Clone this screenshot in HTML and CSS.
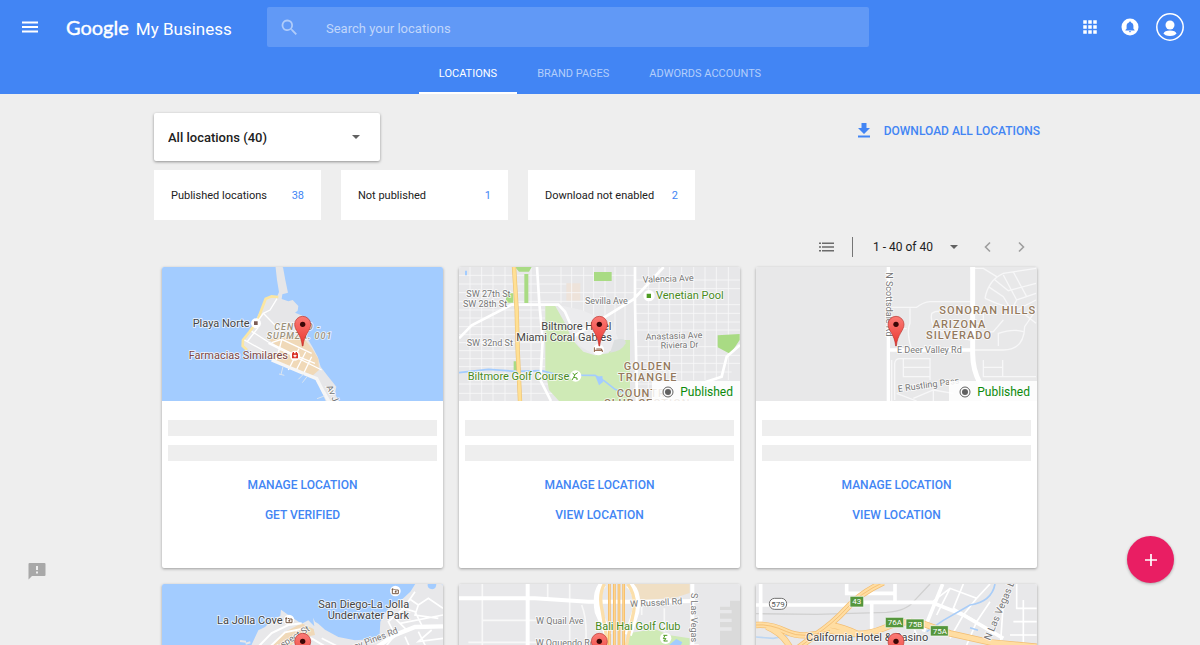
FILE: index.html
```html
<!DOCTYPE html>
<html lang="en">
<head>
<meta charset="utf-8">
<meta name="viewport" content="width=device-width, initial-scale=1">
<title>Google My Business</title>
<link rel="stylesheet" href="styles.css">
</head>
<body>
<svg class="defs" aria-hidden="true">
  <defs>
    <linearGradient id="pin-fill" x1="0" y1="0" x2="0" y2="1">
      <stop offset="0" stop-color="#fb7b76"/><stop offset="1" stop-color="#ea352e"/>
    </linearGradient>
    <symbol id="pin" viewBox="-30 -30 60 100" overflow="visible">
      <path d="M-24 0A24 24 0 1 1 24 0C24 19 4 30 1 65H-1C-4 30-24 19-24 0Z" fill="url(#pin-fill)" stroke="#b8322c" stroke-width="2"/>
      <circle r="8" fill="#3a0706"/>
    </symbol>
    <symbol id="camera" viewBox="-16 -16 32 32" overflow="visible">
      <circle r="16" fill="#fff"/>
      <path d="M-9-5V8H9V-3H0L-3-6M-8-8V-2M-11-5H-5" fill="none" stroke="#7b5c46" stroke-width="3"/><circle cx="1" cy="2" r="3" fill="#7b5c46"/>
    </symbol>
  </defs>
</svg>

<header class="topbar">
  <div class="topbar-row">
    <button class="icon-button menu-button" aria-label="Main menu">
      <svg width="24" height="24" viewBox="0 0 24 24" fill="#fff"><path d="M4 6.500h16v2H4zM4 11h16v2H4zM4 15.500h16v2H4z"/></svg>
    </button>
    <a class="logo" href="#"><span class="logo-google">Google</span><span class="logo-product">My Business</span></a>
    <form class="search" role="search">
      <svg width="21" height="21" viewBox="0 0 24 24" fill="currentColor" aria-hidden="true"><path d="M15.500 14h-.8l-.3-.3A6.500 6.500 0 1 0 13.700 14.400l.3.3v.8l5 5 1.500-1.500zm-6 0a4.500 4.500 0 1 1 0-9 4.500 4.500 0 0 1 0 9z"/></svg>
      <input type="text" placeholder="Search your locations" aria-label="Search your locations">
    </form>
    <div class="topbar-actions">
      <button class="icon-button apps-button" aria-label="Google apps">
        <svg width="24" height="24" viewBox="0 0 24 24" fill="#fff"><path d="M5 5h4v4H5zM10 5h4v4h-4zM15 5h4v4h-4zM5 10h4v4H5zM10 10h4v4h-4zM15 10h4v4h-4zM5 15h4v4H5zM10 15h4v4h-4zM15 15h4v4h-4z" stroke="#4285f4" stroke-width=".5"/></svg>
      </button>
      <button class="icon-button" aria-label="Notifications">
        <svg width="24" height="24" viewBox="0 0 24 24"><circle cx="12" cy="12" r="8.500" fill="#fff"/><path d="M12 6.500c-.6 0-1 .4-1 .9-1.600.5-2.400 1.800-2.400 3.300v3l-1.200 1.300v.5h9.200V15l-1.200-1.300v-3c0-1.500-.8-2.800-2.400-3.300 0-.5-.4-.9-1-.9zM10.900 16.200h2.200c0 .6-.5 1-1.100 1s-1.100-.4-1.100-1z" fill="#4285f4"/></svg>
      </button>
      <button class="icon-button" aria-label="Account">
        <svg width="28" height="28" viewBox="0 0 28 28"><circle cx="14" cy="14" r="13.200" fill="none" stroke="#fff" stroke-width="1.500"/><circle cx="14" cy="12" r="4.500" fill="#fff"/><ellipse cx="14" cy="20.300" rx="6.200" ry="2.800" fill="#fff"/></svg>
      </button>
    </div>
  </div>
  <nav class="tabs" aria-label="Sections">
    <a class="tab tab-active" href="#" aria-current="page">LOCATIONS</a>
    <a class="tab" href="#">BRAND PAGES</a>
    <a class="tab" href="#">ADWORDS ACCOUNTS</a>
  </nav>
</header>

<main class="content">
  <div class="page">
    <div class="filters">
      <div class="select-box group-select">
        <select aria-label="Location group"><option>All locations (40)</option></select>
      </div>
      <a class="download" href="#">
        <svg width="20" height="20" viewBox="0 0 20 20" fill="currentColor" aria-hidden="true"><path d="M7.500 2h5v5H16l-6 6-6-6h3.500zM4 14.500h12v2H4z"/></svg>
        DOWNLOAD ALL LOCATIONS
      </a>
    </div>
    <div class="stats">
      <a class="stat" href="#"><span>Published locations</span><span class="stat-count">38</span></a>
      <a class="stat" href="#"><span>Not published</span><span class="stat-count">1</span></a>
      <a class="stat" href="#"><span>Download not enabled</span><span class="stat-count">2</span></a>
    </div>
    <div class="toolbar">
      <button class="icon-button list-button" aria-label="List view">
        <svg width="18" height="20" viewBox="0 0 18 20" fill="#6b6b6b"><path d="M1 5.500h2v1.600H1zM4 5.500h12v1.600H4zM1 9.200h2v1.600H1zM4 9.200h12v1.600H4zM1 12.900h2v1.600H1zM4 12.900h12v1.600H4z"/></svg>
      </button>
      <div class="select-box range-select">
        <select aria-label="Range"><option>1 - 40 of 40</option></select>
      </div>
      <button class="icon-button" aria-label="Previous page">
        <svg width="20" height="20" viewBox="0 0 20 20" fill="none" stroke="#9e9e9e" stroke-width="1.600"><path d="M12 5.500L7.500 10l4.500 4.500"/></svg>
      </button>
      <button class="icon-button next-button" aria-label="Next page">
        <svg width="20" height="20" viewBox="0 0 20 20" fill="none" stroke="#9e9e9e" stroke-width="1.600"><path d="M8 5.500l4.500 4.500L8 14.500"/></svg>
      </button>
    </div>

    <div class="cards">
      <article class="card">
        <div class="map">
          <svg viewBox="21 21 843 402" preserveAspectRatio="xMidYMid slice" role="img" aria-label="Map of Playa Norte">
            <rect width="900" height="440" fill="#a3ccff"/>
            <path d="M361 15L384 22 391 60 399 98 382 103 380 117 400 124 413 120 430 138 428 152 420 158 450 170 462 210 455 232 473 262 488 290 497 320 520 350 544 380 540 402 552 423H512L490 370 474 350 400 320 350 300 300 282 264 262 262 240 283 214 318 150 330 116 350 109 366 111 372 96 366 60Z" fill="#e6e6e8"/>
            <path d="M370 111L350 109 332 116 320 148 306 185 283 216 264 240 263 258 276 270" fill="none" stroke="#fbe6a2" stroke-width="8"/>
            <path d="M340 238L440 226 470 264 490 296 492 330 474 346 400 318 350 298 380 270Z" fill="#f0d9b8"/>
            <path d="M366 116L345 150 325 160 300 195M325 160L372 208M290 214L340 246 430 290 480 310M268 240L330 274M310 202L276 246M350 248L380 238 470 280M340 250L500 330M432 266L400 330M452 276L424 330M470 290L446 340M380 240L364 300" fill="none" stroke="#fff" stroke-width="4"/>
            <path d="M350 300L450 342 485 356 505 395 525 430" fill="none" stroke="#f6f6f6" stroke-width="10"/>
            <path d="M384 320L378 343M372 342L388 346M446 342L430 358M456 350L442 368M508 408L486 416" fill="none" stroke="#dbe5f0" stroke-width="3"/>
            <circle cx="303" cy="190" r="15" fill="#fff"/><path d="M297 184h11v11h-11z" fill="#7b5c55"/>
            <circle cx="420" cy="287" r="15" fill="#fff"/><path d="M411 280h18v15h-18zM413 276h4v5h-4zM422 276h4v5h-4z" fill="#d93025"/><path d="M418 284h4v8h-4zM415 286h10v3h-10z" fill="#fff"/>
            <text class="place" x="113" y="200">Playa Norte</text>
            <text class="place place-brown" x="101" y="297">Farmacias Similares</text>
            <text class="district district-italic" x="358" y="210">CENTRO -</text>
            <text class="district district-italic" x="335" y="238">SUPMZA. 001</text>
            <text class="street" transform="translate(514 380) rotate(66)">Av J</text>
            <use href="#pin" x="413" y="163" width="60" height="100"/>
          </svg>
        </div>
        <div class="lines"><div class="line"></div><div class="line"></div></div>
        <div class="card-actions"><a href="#">MANAGE LOCATION</a><a href="#">GET VERIFIED</a></div>
      </article>

      <article class="card">
        <div class="map">
          <svg viewBox="12 21 843 402" preserveAspectRatio="xMidYMid slice" role="img" aria-label="Map of Biltmore Hotel, Miami Coral Gables">
            <rect width="900" height="440" fill="#e7e7e9"/>
            <path d="M334 70h42v52h-42z" fill="#eee3da"/>
            <g stroke="#f8f8f9" stroke-width="2.500" fill="none">
              <path d="M12 46H540M12 72H334M12 98H540M12 124H400M12 150H270M12 174H270M12 200H270M12 224H260M12 248H260M12 272H260M12 296H270M12 320H270M12 372H290M12 400H310M540 60H860M540 86H860M540 134H860M540 160H860M540 186H860M540 210H860M540 260H790M540 286H860M540 310H860M540 336H830M540 372H620"/>
              <path d="M45 20V423M80 20V423M114 20V423M150 20V423M228 20V423M318 20V130M350 20V160M386 20V230M416 20V230M450 20V230M480 20V230M510 20V423M580 20V423M612 20V360M644 20V360M680 20V360M716 20V360M750 20V360M784 20V360M820 20V360"/>
            </g>
            <path d="M180 21h50l-8 14h-30zM208 42h12v87h-12zM153 100h22v28h-22zM417 36h53v27h-53zM788 226l66-4v18l-28 42-38-20zM176 304h12v26h-12z" fill="#a9db84"/>
            <path d="M271 135H299L330 190 352 240 385 275 420 286 460 280 485 240H525V423H312L282 390 271 330Z" fill="#cfeab6"/>
            <path d="M299 133L320 140 346 200 370 256 420 286 470 272 490 236 470 190 380 150Z" fill="#ececee"/>
            <path d="M478 240Q515 230 512 250Q500 275 465 278Z" fill="#dcdfe0"/>
            <path d="M12 338L100 328 180 334 260 332 310 345 420 346 450 364 480 388 512 400" fill="none" stroke="#a3ccff" stroke-width="5"/>
            <path d="M422 350L442 348 444 366 432 376Z" fill="#a3ccff"/><path d="M30 32h6v14h-6z" fill="#a3ccff"/>
            <path d="M12 235L50 196 170 134H310L330 155 350 200M345 236L535 118 590 60 626 21M540 21V130L546 423M246 21L253 130 263 240 256 360 288 423M855 255L815 290 800 350 740 370" fill="none" stroke="#fff" stroke-width="8"/>
            <path d="M177 20L185 150 188 270 195 423" fill="none" stroke="#efc476" stroke-width="13"/><path d="M177 20L185 150 188 270 195 423" fill="none" stroke="#ffe094" stroke-width="9"/>
            <circle cx="582" cy="107" r="17" fill="#fff"/><path d="M575 101h13v13h-13z" fill="#4d9c22"/>
            <circle cx="430" cy="269" r="17" fill="#fff"/><path d="M418 262v14M418 271h24v5M424 267h16v4" fill="none" stroke="#8b5b3c" stroke-width="3"/>
            <circle cx="362" cy="348" r="17" fill="#fff"/><path d="M353 340l6 4 9-6M360 344l-4 8 10 2v6M356 352l-5 8" fill="none" stroke="#4d9c22" stroke-width="3"/>
            <text class="street" x="34" y="112">SW 27th St</text><text class="street" x="24" y="140">SW 28th St</text><text class="street" x="35" y="258">SW 32nd St</text>
            <text class="street" x="390" y="132">Sevilla Ave</text><text class="street" transform="translate(563 68) rotate(-2)">Valencia Ave</text>
            <text class="street" transform="translate(572 240) rotate(-2)">Anastasia Ave</text><text class="street" transform="translate(617 266) rotate(-2)">Riviera Dr</text>
            <text class="place place-green" x="603" y="116">Venetian Pool</text><text class="place place-green" x="38" y="359">Biltmore Golf Course</text>
            <text class="place" x="259" y="209">Biltmore Hotel</text><text class="place" x="184" y="242">Miami Coral Gables</text>
            <text class="district" x="506" y="330">GOLDEN</text><text class="district" x="489" y="362">TRIANGLE</text><text class="district" x="485" y="411">COUNTRY</text><text class="district" x="446" y="441">CLUB SECTION</text>
            <use href="#pin" x="403" y="163" width="60" height="100"/>
          </svg>
          <div class="status"><svg width="12" height="12" viewBox="0 0 12 12" aria-hidden="true"><circle cx="6" cy="6" r="5" fill="none" stroke="#616161"/><circle cx="6" cy="6" r="3" fill="#616161"/></svg>Published</div>
        </div>
        <div class="lines"><div class="line"></div><div class="line"></div></div>
        <div class="card-actions"><a href="#">MANAGE LOCATION</a><a href="#">VIEW LOCATION</a></div>
      </article>

      <article class="card">
        <div class="map">
          <svg viewBox="18 21 843 402" preserveAspectRatio="xMidYMid slice" role="img" aria-label="Map of E Deer Valley Rd">
            <rect width="900" height="440" fill="#e8e8e9"/>
            <g fill="none" stroke="#f7f7f8" stroke-width="4">
              <path d="M425 142H500Q520 126 540 125H670M480 145V190Q468 215 485 268M425 206H470M670 270H760Q822 270 824 200L858 150M745 258V220Q790 205 820 215M700 150V190H650M545 160Q560 150 580 155M545 160Q540 190 560 210L660 240M425 300V423M434 420V310Q436 296 450 296H540V360M460 296V350H540M460 322H540M700 300V350H858M700 322H760M758 300V350M490 415L550 390 610 400M440 400L500 423M550 390V423"/>
              <path d="M705 115Q715 60 760 40L858 25M715 80L760 110 790 160M735 60L775 92 858 70M760 45L800 120 858 100M790 36L830 110M705 115L740 130 800 150 858 120M800 120L780 160M660 25H700L740 50M820 160L858 190M690 220L730 215 760 180"/>
            </g>
            <path d="M415 21V423M415 270H670" fill="none" stroke="#fff" stroke-width="10"/><path d="M668 21V280Q668 330 690 370L702 423" fill="none" stroke="#fff" stroke-width="15"/>
            <text class="street" transform="translate(408 37) rotate(90)">N Scottsdale Rd</text>
            <text class="street" x="441" y="278">E Deer Valley Rd</text><text class="street" transform="translate(445 396) rotate(-8)">E Rustling Pass</text>
            <text class="district" x="568" y="162">SONORAN HILLS</text><text class="district" x="548" y="204">ARIZONA</text><text class="district" x="528" y="236">SILVERADO</text>
            <use href="#pin" x="408" y="163" width="60" height="100"/>
          </svg>
          <div class="status"><svg width="12" height="12" viewBox="0 0 12 12" aria-hidden="true"><circle cx="6" cy="6" r="5" fill="none" stroke="#616161"/><circle cx="6" cy="6" r="3" fill="#616161"/></svg>Published</div>
        </div>
        <div class="lines"><div class="line"></div><div class="line"></div></div>
        <div class="card-actions"><a href="#">MANAGE LOCATION</a><a href="#">VIEW LOCATION</a></div>
      </article>

      <article class="card">
        <div class="map">
          <svg viewBox="21 87 843 402" preserveAspectRatio="xMidYMid slice" role="img" aria-label="Map of La Jolla Cove">
            <rect width="900" height="500" fill="#a3ccff"/>
            <path d="M782 85L766 110 740 134 712 146 690 175 676 200 674 236 655 252 600 256 550 246 510 224 490 206 480 200 474 188 478 214 460 196 440 206 400 180 378 164 376 182 346 200 330 216 310 226 280 290 300 500H870V85Z" fill="#e8e8ea"/>
            <path d="M818 87h26q0 14-12 16-16-2-14-16z" fill="#a3ccff"/><path d="M255 258l18 2M272 266l14-4" stroke="#e8e8ea" stroke-width="6"/>
            <path d="M350 270L380 236 440 205 476 222 480 240 430 250 390 290Z" fill="#f0d9b8"/>
            <path d="M310 275L350 234 400 210 440 205M340 280L390 232 450 220M365 290L420 240 470 250 520 280" fill="none" stroke="#fff" stroke-width="6"/>
            <path d="M780 110L746 160 700 200 720 240 680 290M764 132L790 150 820 130 864 160M746 160L780 170 800 210M720 190L760 230M790 150L780 180 850 190M735 205L864 180M790 230L820 290M830 225L790 260 864 250M750 245L770 290M500 250L560 280" fill="none" stroke="#fff" stroke-width="5"/>
            <path d="M864 214L780 216 720 240 660 280" fill="none" stroke="#fff" stroke-width="13"/>
            <use href="#camera" x="705" y="92" width="32" height="32"/><use href="#camera" x="386" y="179" width="32" height="32"/>
            <text class="place" x="490" y="158">San Diego-La Jolla</text><text class="place" x="518" y="191">Underwater Park</text><text class="place" x="186" y="208">La Jolla Cove</text>
            <text class="street" transform="translate(348 300) rotate(-32)">Prospect St</text><text class="street" transform="translate(556 301) rotate(-21)">Torrey Pines Rd</text>
            <use href="#pin" x="413" y="229" width="60" height="100"/>
          </svg>
        </div>
        <div class="lines"><div class="line"></div><div class="line"></div></div>
        <div class="card-actions"><a href="#">MANAGE LOCATION</a><a href="#">VIEW LOCATION</a></div>
      </article>

      <article class="card">
        <div class="map">
          <svg viewBox="12 87 843 402" preserveAspectRatio="xMidYMid slice" role="img" aria-label="Map of Bali Hai Golf Club">
            <rect width="900" height="500" fill="#e8e8ea"/>
            <path d="M795 155h30v-18h30v140h-60v-50h35v-10h-35v-16h35v-10h-35v-16h35v-10h-35z" fill="#dadada"/>
            <path d="M530 87H704V114L660 128 560 136 540 120Z" fill="#f0dfc4"/>
            <path d="M520 235L600 222 640 240 704 250V500H510Z" fill="#cfeab6"/><path d="M640 272L664 252 682 262 672 280Z" fill="#a3ccff"/>
            <path d="M82 87V300M278 87V130M344 87V270M82 196H244M40 262H230M218 262H360M380 150Q400 200 390 290M628 160V230M560 140V180" fill="none" stroke="#f8f8f8" stroke-width="5"/>
            <path d="M12 130H240L400 140H560L720 138M218 87V290M712 87V500" fill="none" stroke="#fff" stroke-width="12"/>
            <path d="M445 87Q420 110 430 170L460 240M520 87Q552 110 542 170L520 240" fill="none" stroke="#fff" stroke-width="22"/>
            <path d="M448 87Q430 120 442 170L462 290M518 87Q544 120 536 170L510 290" fill="none" stroke="#fbdfab" stroke-width="10"/>
            <path d="M463 87V300M478 87V300M492 87V300M506 87V300" fill="none" stroke="#f3b761" stroke-width="8"/><path d="M463 87V300M478 87V300M492 87V300M506 87V300" fill="none" stroke="#ffd58c" stroke-width="4"/>
            <circle cx="632" cy="250" r="17" fill="#fff"/><path d="M625 241h12M630 241l-5 10h8l-7 7h12" fill="none" stroke="#4d9c22" stroke-width="3"/>
            <text class="street" transform="translate(526 156) rotate(-3)">W Russell Rd</text><text class="street" x="243" y="208">W Quail Ave</text><text class="street" x="242" y="274">W Oquendo Rd</text>
            <text class="street" transform="translate(709 114) rotate(90)">S Las Vegas Blvd</text>
            <text class="place place-green" x="421" y="224">Bali Hai Golf Club</text>
            <use href="#pin" x="403" y="229" width="60" height="100"/>
          </svg>
        </div>
        <div class="lines"><div class="line"></div><div class="line"></div></div>
        <div class="card-actions"><a href="#">MANAGE LOCATION</a><a href="#">VIEW LOCATION</a></div>
      </article>

      <article class="card">
        <div class="map">
          <svg viewBox="18 87 843 402" preserveAspectRatio="xMidYMid slice" role="img" aria-label="Map of California Hotel and Casino">
            <rect width="900" height="500" fill="#e8e8ea"/>
            <path d="M18 176L200 178 410 172Q470 168 494 136L540 87" fill="none" stroke="#d0d0d0" stroke-width="4"/>
            <path d="M32 87V200M18 150H300M340 142H545L640 180 760 250M290 87V115H435V140M435 87V120M365 140V230M578 87L520 230" fill="none" stroke="#fff" stroke-width="11"/>
            <path d="M545 142L600 100 680 130 720 87M600 100L560 180M640 87L610 160 680 200 720 140M640 180L600 250M680 130L640 180M680 200L650 270M760 140L750 290M800 87V160H860M780 240H860M820 135V290M790 200H860M480 190L500 240" fill="none" stroke="#fff" stroke-width="5"/>
            <path d="M735 87Q725 140 660 150L580 196 530 230" fill="none" stroke="#a9cdf8" stroke-width="5"/><path d="M660 218l24 8" stroke="#a9cdf8" stroke-width="5"/>
            <path d="M18 246L70 250 120 240M365 226L300 250" stroke="#bcd6f3" stroke-width="5" fill="none"/>
            <g fill="none" stroke="#f3bd71" stroke-width="19"><path d="M400 82Q330 115 290 160T190 245L130 290M18 210Q60 206 110 230T240 226Q330 250 400 220T520 206L600 235 720 262 860 275M50 215Q110 240 130 300M240 210Q280 216 330 240"/></g>
            <g fill="none" stroke="#ffdda2" stroke-width="15"><path d="M400 82Q330 115 290 160T190 245L130 290M18 210Q60 206 110 230T240 226Q330 250 400 220T520 206L600 235 720 262 860 275M50 215Q110 240 130 300M240 210Q280 216 330 240"/></g>
            <path d="M400 82Q330 115 290 160T190 245L130 290M18 210Q60 206 110 230T240 226" fill="none" stroke="#eeb465" stroke-width="2"/>
            <rect x="58" y="130" width="52" height="33" rx="16" fill="#fff" stroke="#707070" stroke-width="3"/><text class="route" x="64" y="155">579</text>
            <g fill="#55963c" stroke="#fff" stroke-width="2"><path d="M300 124h41v32h-41zM406 187h55v31h-55zM468 192h54v31h-54zM541 212h54v31h-54z"/></g>
            <text class="exit" x="307" y="148">43</text><text class="exit" x="413" y="211">76A</text><text class="exit" x="475" y="216">75B</text><text class="exit" x="548" y="236">75A</text>
            <text class="street street-wide" transform="translate(720 258) rotate(-67)">N Las Vegas Blvd</text>
            <text class="place" x="168" y="259">California Hotel &amp; Casino</text>
            <use href="#pin" x="408" y="229" width="60" height="100"/>
          </svg>
        </div>
        <div class="lines"><div class="line"></div><div class="line"></div></div>
        <div class="card-actions"><a href="#">MANAGE LOCATION</a><a href="#">VIEW LOCATION</a></div>
      </article>
    </div>
  </div>
</main>

<button class="feedback" aria-label="Send feedback">
  <svg width="18" height="18" viewBox="0 0 18 18"><path d="M1.500 1h15q1 0 1 1v11q0 1-1 1H4L.5 17.500V2q0-1 1-1z" fill="#a8a8a8"/><path d="M8 4h2v4H8zM8 9.500h2v2H8z" fill="#eee"/></svg>
</button>
<button class="fab" aria-label="Add location">
  <svg width="24" height="24" viewBox="0 0 24 24" fill="none" stroke="#fff" stroke-width="1.700"><path d="M12 6v12M6 12h12"/></svg>
</button>
</body>
</html>
```

FILE: styles.css
```css
* { box-sizing: border-box; }

body {
  display: flex;
  flex-direction: column;
  height: 100vh;
  margin: 0;
  background: #eee;
  color: #212121;
  font-family: Roboto, "Liberation Sans", sans-serif;
  font-size: 11px;
}

a { color: inherit; text-decoration: none; }
svg { display: block; }
.defs { position: absolute; width: 0; height: 0; }

.icon-button {
  display: flex;
  padding: 0;
  border: 0;
  background: none;
  cursor: pointer;
}

/* Header */
.topbar { flex: none; background: #4285f4; color: #fff; }

.topbar-row {
  display: grid;
  grid-template-columns: 24px 177px minmax(0, 602px) 1fr;
  align-items: center;
  column-gap: 24px;
  padding: 7px 16px 0 18px;
}

.logo {
  display: flex;
  align-items: baseline;
  gap: 7px;
  font-size: 17px;
  white-space: nowrap;
}
.logo-google {
  font-family: Lato, sans-serif;
  font-size: 20px;
  -webkit-text-stroke: 0.4px #fff;
}

.search {
  display: flex;
  align-items: center;
  gap: 26px;
  height: 40px;
  padding: 0 12px;
  border-radius: 2px;
  background: #6199f6;
  color: #b0ccfa;
}
.search input {
  flex: 1;
  min-width: 0;
  padding: 2px 0 0;
  border: 0;
  outline: 0;
  background: none;
  color: #fff;
  font: 13px Roboto, sans-serif;
}
.search input::placeholder { color: #c0d6fb; opacity: 1; }

.topbar-actions {
  display: flex;
  justify-content: flex-end;
  align-items: center;
  gap: 14px;
}
.apps-button { padding-right: 2px; }

.tabs { display: flex; justify-content: center; margin-top: 7px; }
.tab {
  padding: 1px 20px 0;
  border-bottom: 2px solid transparent;
  color: #b3cefb;
  line-height: 37px;
}
.tab-active { border-color: #fff; color: #fff; }

/* Page */
.content { flex: 1; min-height: 0; overflow-y: auto; scrollbar-width: none; }
.page { max-width: 892px; margin: 0 auto; padding: 19px 0 16px; }

.filters { display: flex; justify-content: space-between; padding-right: 6px; }

.select-box { position: relative; }
.select-box::after {
  content: "";
  position: absolute;
  top: 50%;
  right: 20px;
  margin-top: -2px;
  border: 4px solid transparent;
  border-top-color: #616161;
  border-bottom: 0;
  pointer-events: none;
}
.select-box select {
  width: 100%;
  height: 100%;
  padding: 0;
  border: 0;
  outline: 0;
  appearance: none;
  background: none;
  color: inherit;
  font: inherit;
}

.group-select {
  width: 226px;
  height: 48px;
  border-radius: 2px;
  background: #fff;
  box-shadow: 0 1px 3px rgba(0, 0, 0, .4);
  font-size: 13px;
  font-weight: 500;
}
.group-select select { padding: 0 14px; }

.download {
  display: flex;
  align-items: center;
  gap: 10px;
  height: 36px;
  color: #4285f4;
  font-size: 12px;
  font-weight: 500;
}

.stats {
  display: grid;
  grid-template-columns: repeat(3, 167px);
  gap: 20px;
  margin-top: 9px;
}
.stat {
  display: flex;
  justify-content: space-between;
  align-items: center;
  height: 50px;
  padding: 0 17px;
  background: #fff;
}
.stat-count { color: #4285f4; }

.toolbar {
  display: flex;
  justify-content: flex-end;
  align-items: center;
  margin: 17px 15px 10px 0;
}
.list-button { padding-right: 16px; border-right: 1px solid #757575; }
.range-select { width: 125px; height: 20px; font-size: 12px; }
.range-select select { padding-left: 20px; }
.next-button { margin-left: 13px; }

/* Cards */
.cards {
  display: grid;
  grid-template-columns: repeat(3, minmax(0, 1fr));
  gap: 16px;
  padding: 0 9px 0 8px;
}
.card {
  min-height: 301px;
  overflow: hidden;
  border-radius: 2px;
  background: #fff;
  box-shadow: 0 1px 3px rgba(0, 0, 0, .35);
}
.map { position: relative; height: 134px; overflow: hidden; }
.map > svg { width: 100%; height: 100%; }

.place, .street, .district {
  fill: #444;
  font-size: 33px;
  paint-order: stroke;
  stroke: rgba(255, 255, 255, .8);
  stroke-width: 5px;
}
.place-brown { fill: #7d4743; }
.place-green { fill: #488a1c; }
.street { fill: #777; font-size: 27px; }
.street-wide { font-size: 30px; }
.district { fill: #94795d; font-weight: 500; letter-spacing: 3px; }
.district-italic { fill: #9b9079; font-size: 27px; font-style: italic; }
.exit { fill: #fff; font-size: 24px; }
.route { fill: #555; font-size: 24px; }

.status {
  position: absolute;
  right: 0;
  bottom: 0;
  display: flex;
  align-items: center;
  gap: 6px;
  height: 20px;
  padding: 2px 7px 0 10px;
  background: rgba(255, 255, 255, .85);
  color: #0b8a0b;
  font-size: 12px;
}

.lines { display: grid; gap: 9px; padding: 19px 6px 0; }
.line { height: 16px; background: #eee; }

.card-actions {
  display: flex;
  flex-direction: column;
  align-items: center;
  margin-top: 9px;
  color: #4285f4;
  font-size: 12px;
  font-weight: 500;
  line-height: 30px;
}

/* Floating buttons */
.feedback {
  position: fixed;
  bottom: 65px;
  left: 28px;
  padding: 0;
  border: 0;
  background: none;
}
.fab {
  position: fixed;
  right: 26px;
  bottom: 62px;
  display: flex;
  justify-content: center;
  align-items: center;
  width: 47px;
  height: 47px;
  padding: 0;
  border: 0;
  border-radius: 50%;
  background: #e91e63;
  box-shadow: 0 1px 3px rgba(0, 0, 0, .3);
}
```
